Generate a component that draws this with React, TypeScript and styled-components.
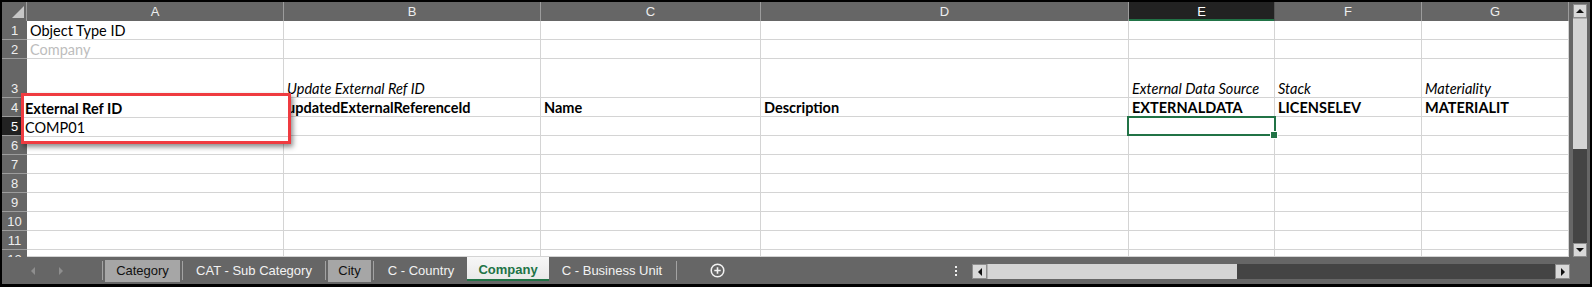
import React from "react";
import styled, { createGlobalStyle, css } from "styled-components";

const GlobalStyle = createGlobalStyle`
  html, body { margin: 0; padding: 0; background: #000; }
  body { font-family: Lato, "Liberation Sans", sans-serif; }
  * { box-sizing: border-box; }
`;

const GRID = "#d4d4d4";
const HEAD_LINE = "#9c9c9c";
const GREEN = "#217346";
const CELL_FONT = `Lato, "Liberation Sans", sans-serif`;
const UI_FONT = `"Liberation Sans", Arial, sans-serif`;

const Frame = styled.div`
  width: 1592px;
  height: 287px;
  background: #000;
  padding: 2px 2px 3px 2px;
`;

const Window = styled.div`
  height: 100%;
  background: #666;
  display: flex;
  flex-direction: column;
`;

const Main = styled.div`
  display: flex;
  height: 255px;
`;

const Sheet = styled.div`
  position: relative;
  width: 1567px;
  display: grid;
  grid-template-columns: 25px 257px 257px 220px 368px 146px 147px 147px;
  grid-template-rows: 19px 19px 19px 39px 19px 19px repeat(6, 19px) 7px;
  background: #fff;
  overflow: hidden;
`;

const Corner = styled.div`
  position: relative;
  background: #666;
  border-right: 1px solid ${HEAD_LINE};
  &::after {
    content: "";
    position: absolute;
    right: 2px;
    bottom: 3px;
    width: 0;
    height: 0;
    border-left: 12px solid transparent;
    border-bottom: 12px solid #c6c6c6;
  }
`;

const ColHeader = styled.div<{ $selected?: boolean }>`
  background: ${(p) => (p.$selected ? "#222" : "#666")};
  color: ${(p) => (p.$selected ? "#fff" : "#eee")};
  border-right: 1px solid ${HEAD_LINE};
  display: flex;
  align-items: center;
  justify-content: center;
  font-family: ${UI_FONT};
  font-size: 13px;
  ${(p) =>
    p.$selected &&
    css`
      box-shadow: inset 0 -2px 0 ${GREEN};
      border-right-color: #555;
    `}
`;

const RowHeader = styled.div<{ $selected?: boolean }>`
  background: ${(p) => (p.$selected ? "#222" : "#666")};
  color: ${(p) => (p.$selected ? "#fff" : "#eee")};
  border-bottom: 1px solid ${HEAD_LINE};
  display: flex;
  align-items: flex-end;
  justify-content: center;
  padding-bottom: 1px;
  font-family: ${UI_FONT};
  font-size: 13px;
  line-height: 15px;
  overflow: hidden;
`;

const PartialRowHeader = styled(RowHeader)`
  align-items: flex-start;
  padding-top: 2px;
  border-bottom: none;
`;

const Cell = styled.div<{
  $bold?: boolean;
  $italic?: boolean;
  $muted?: boolean;
  $selected?: boolean;
}>`
  position: relative;
  border-right: 1px solid ${GRID};
  border-bottom: 1px solid ${GRID};
  display: flex;
  align-items: flex-end;
  padding: 0 3px 0 3px;
  font-family: ${CELL_FONT};
  font-size: 14.5px;
  line-height: 16px;
  white-space: nowrap;
  color: ${(p) => (p.$muted ? "#bdbdbd" : "#000")};
  font-weight: ${(p) => (p.$bold ? 700 : 400)};
  font-style: ${(p) => (p.$italic ? "italic" : "normal")};
  ${(p) =>
    p.$selected &&
    css`
      z-index: 2;
      &::before {
        content: "";
        position: absolute;
        left: -2px;
        top: -1px;
        right: -2px;
        bottom: -1px;
        border: 2px solid ${GREEN};
      }
      &::after {
        content: "";
        position: absolute;
        right: -4px;
        bottom: -4px;
        width: 6px;
        height: 6px;
        background: ${GREEN};
        border: 1px solid #fff;
      }
    `}
`;

const Callout = styled.div`
  position: absolute;
  left: 19px;
  top: 91px;
  width: 270px;
  height: 51px;
  border: 3px solid #ef3b40;
  background: #fff;
  box-shadow: 2px 3px 5px rgba(0, 0, 0, 0.45);
  z-index: 3;
  display: flex;
  flex-direction: column;
`;

const CalloutRow = styled.div<{ $h: number; $bold?: boolean }>`
  height: ${(p) => p.$h}px;
  flex: none;
  border-bottom: 1px solid ${GRID};
  display: flex;
  align-items: flex-end;
  padding: 0 0 0 1px;
  font-family: ${CELL_FONT};
  font-size: 14.5px;
  line-height: 16px;
  font-weight: ${(p) => (p.$bold ? 700 : 400)};
  color: #000;
  white-space: nowrap;
`;

/* Scrollbars */
const VScroll = styled.div`
  width: 21px;
  padding: 2px 3px 0 4px;
  display: flex;
`;

const VTrack = styled.div`
  flex: 1;
  background: #444;
  display: flex;
  flex-direction: column;
`;

const ArrowBtn = styled.div<{ $size: number }>`
  flex: none;
  width: ${(p) => p.$size}px;
  height: ${(p) => p.$size}px;
  background: #d9d9d9;
  border: 1px solid #8d8d8d;
  display: flex;
  align-items: center;
  justify-content: center;
`;

const Tri = styled.span<{ $dir: "up" | "down" | "left" | "right"; $color?: string }>`
  width: 0;
  height: 0;
  ${(p) => {
    const c = p.$color ?? "#111";
    switch (p.$dir) {
      case "up":
        return css`
          border-left: 4px solid transparent;
          border-right: 4px solid transparent;
          border-bottom: 4px solid ${c};
        `;
      case "down":
        return css`
          border-left: 4px solid transparent;
          border-right: 4px solid transparent;
          border-top: 4px solid ${c};
        `;
      case "left":
        return css`
          border-top: 4px solid transparent;
          border-bottom: 4px solid transparent;
          border-right: 4px solid ${c};
        `;
      default:
        return css`
          border-top: 4px solid transparent;
          border-bottom: 4px solid transparent;
          border-left: 4px solid ${c};
        `;
    }
  }}
`;

const VThumb = styled.div`
  flex: none;
  height: 131px;
  background: #d4d4d4;
  border-top: 1px solid #b0b0b0;
`;

const Fill = styled.div`
  flex: 1;
`;

/* Tab bar */
const TabBar = styled.div`
  height: 27px;
  display: flex;
  align-items: flex-start;
  padding-right: 20px;
  font-family: ${UI_FONT};
  font-size: 13px;
`;

const Nav = styled.div`
  width: 98px;
  height: 27px;
  display: flex;
  align-items: center;
  padding-left: 29px;
  gap: 24px;
`;

const Sep = styled.div`
  flex: none;
  width: 1px;
  height: 19px;
  margin: 4px 2px 0 2px;
  background: #a3a3a3;
`;

const Tab = styled.div<{ $w: number; $bg?: string }>`
  flex: none;
  width: ${(p) => p.$w}px;
  height: 22px;
  margin-top: 3px;
  padding-bottom: 2px;
  display: flex;
  align-items: center;
  justify-content: center;
  background: ${(p) => p.$bg ?? "transparent"};
  color: ${(p) => (p.$bg ? "#111" : "#f2f2f2")};
  white-space: nowrap;
`;

const ActiveTab = styled.div<{ $w: number }>`
  flex: none;
  width: ${(p) => p.$w}px;
  height: 24px;
  margin: 0 1px;
  padding-top: 2px;
  display: flex;
  align-items: center;
  justify-content: center;
  background: linear-gradient(#f7f7f7, #e9e9e9);
  color: ${GREEN};
  font-weight: 700;
  border-bottom: 2px solid ${GREEN};
  white-space: nowrap;
`;

const PlusArea = styled.div`
  flex: none;
  width: 76px;
  height: 27px;
  display: flex;
  align-items: center;
  justify-content: center;
`;

const Dots = styled.div`
  flex: none;
  width: 10px;
  height: 27px;
  margin-right: 11px;
  display: flex;
  flex-direction: column;
  align-items: center;
  justify-content: center;
  gap: 2px;
  & > span {
    width: 2px;
    height: 2px;
    background: #f0f0f0;
  }
`;

const HScroll = styled.div`
  flex: none;
  width: 598px;
  height: 15px;
  margin-top: 7px;
  background: #444;
  display: flex;
`;

const HThumb = styled.div`
  flex: none;
  width: 250px;
  background: #d4d4d4;
  border-left: 1px solid #b0b0b0;
`;

const cols = ["A", "B", "C", "D", "E", "F", "G"];

type CellDef = { text?: string; bold?: boolean; italic?: boolean; muted?: boolean; selected?: boolean };

const rows: { n: number; selected?: boolean; cells: CellDef[] }[] = [
  { n: 1, cells: [{ text: "Object Type ID" }] },
  { n: 2, cells: [{ text: "Company", muted: true }] },
  {
    n: 3,
    cells: [
      {},
      { text: "Update External Ref ID", italic: true },
      {},
      {},
      { text: "External Data Source", italic: true },
      { text: "Stack", italic: true },
      { text: "Materiality", italic: true },
    ],
  },
  {
    n: 4,
    cells: [
      {},
      { text: "updatedExternalReferenceId", bold: true },
      { text: "Name", bold: true },
      { text: "Description", bold: true },
      { text: "EXTERNALDATA", bold: true },
      { text: "LICENSELEV", bold: true },
      { text: "MATERIALIT", bold: true },
    ],
  },
  { n: 5, selected: true, cells: [{}, {}, {}, {}, { selected: true }] },
  { n: 6, cells: [] },
  { n: 7, cells: [] },
  { n: 8, cells: [] },
  { n: 9, cells: [] },
  { n: 10, cells: [] },
  { n: 11, cells: [] },
];

function PlusIcon() {
  return (
    <svg width="15" height="15" viewBox="0 0 15 15">
      <circle cx="7.5" cy="7.5" r="6.3" fill="none" stroke="#f2f2f2" strokeWidth="1.5" />
      <path d="M7.5 4.3v6.4M4.3 7.5h6.4" stroke="#f2f2f2" strokeWidth="1.6" />
    </svg>
  );
}

export default function App() {
  return (
    <>
      <GlobalStyle />
      <Frame>
        <Window>
          <Main>
            <Sheet>
              <Corner />
              {cols.map((c) => (
                <ColHeader key={c} $selected={c === "E"}>
                  {c}
                </ColHeader>
              ))}
              {rows.map((r) => (
                <React.Fragment key={r.n}>
                  <RowHeader $selected={r.selected}>{r.n}</RowHeader>
                  {cols.map((c, i) => {
                    const d = r.cells[i] ?? {};
                    return (
                      <Cell
                        key={c}
                        $bold={d.bold}
                        $italic={d.italic}
                        $muted={d.muted}
                        $selected={d.selected}
                      >
                        {d.text}
                      </Cell>
                    );
                  })}
                </React.Fragment>
              ))}
              <PartialRowHeader>12</PartialRowHeader>
              {cols.map((c) => (
                <Cell key={c} />
              ))}
              <Callout>
                <CalloutRow $h={22} $bold>
                  External Ref ID
                </CalloutRow>
                <CalloutRow $h={19}>COMP01</CalloutRow>
              </Callout>
            </Sheet>
            <VScroll>
              <VTrack>
                <ArrowBtn $size={14}>
                  <Tri $dir="up" />
                </ArrowBtn>
                <VThumb />
                <Fill />
                <ArrowBtn $size={14}>
                  <Tri $dir="down" />
                </ArrowBtn>
              </VTrack>
            </VScroll>
          </Main>
          <TabBar>
            <Nav>
              <Tri $dir="left" $color="#8e8e8e" />
              <Tri $dir="right" $color="#8e8e8e" />
            </Nav>
            <Sep />
            <Tab $w={75} $bg="#a6a6a6">
              Category
            </Tab>
            <Sep />
            <Tab $w={138}>CAT - Sub Category</Tab>
            <Sep />
            <Tab $w={43} $bg="#a6a6a6">
              City
            </Tab>
            <Sep />
            <Tab $w={90}>C - Country</Tab>
            <ActiveTab $w={82}>Company</ActiveTab>
            <Tab $w={124}>C - Business Unit</Tab>
            <Sep />
            <PlusArea>
              <PlusIcon />
            </PlusArea>
            <Fill />
            <Dots>
              <span />
              <span />
              <span />
            </Dots>
            <HScroll>
              <ArrowBtn $size={15}>
                <Tri $dir="left" />
              </ArrowBtn>
              <HThumb />
              <Fill />
              <ArrowBtn $size={15}>
                <Tri $dir="right" />
              </ArrowBtn>
            </HScroll>
          </TabBar>
        </Window>
      </Frame>
    </>
  );
}
